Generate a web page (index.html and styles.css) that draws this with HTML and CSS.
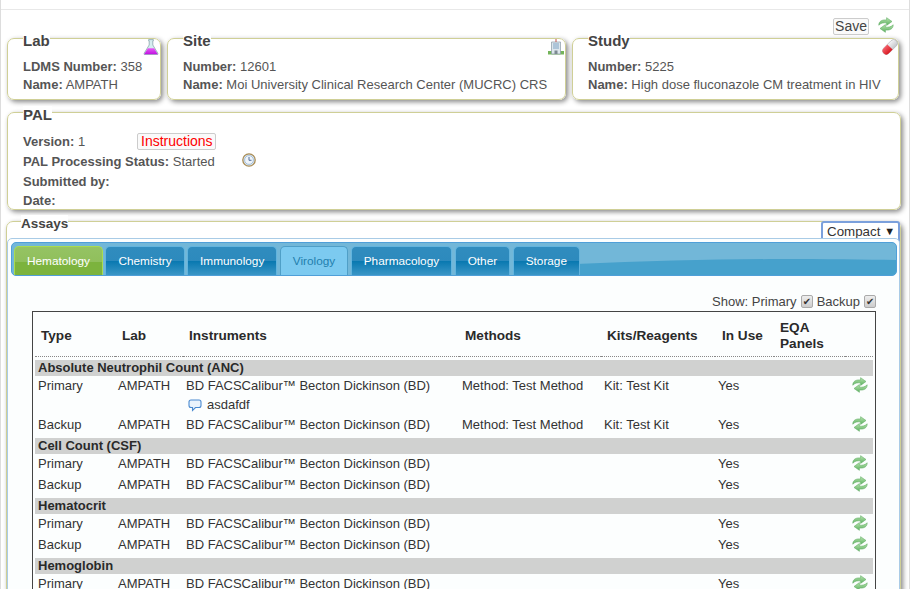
FILE: index.html
```html
<!DOCTYPE html>
<html lang="en">
<head>
<meta charset="utf-8">
<title>PAL</title>
<link rel="stylesheet" href="styles.css">
</head>
<body>
<svg class="defs" width="0" height="0" aria-hidden="true">
  <defs>
    <linearGradient id="gr" x1="0" y1="0" x2="0" y2="1"><stop offset="0" stop-color="#b9e4ae"/><stop offset="1" stop-color="#5bb060"/></linearGradient>
    <linearGradient id="liq" x1="0" y1="0" x2="0" y2="1"><stop offset="0" stop-color="#e85cf5"/><stop offset="1" stop-color="#c010e0"/></linearGradient>
    <linearGradient id="capsule" x1="0" y1="0" x2="0" y2="1"><stop offset="0" stop-color="#f4f4f6"/><stop offset="1" stop-color="#c4c6ca"/></linearGradient>
    <linearGradient id="capred" x1="0" y1="0" x2="0" y2="1"><stop offset="0" stop-color="#f4606a"/><stop offset="1" stop-color="#d81820"/></linearGradient>
    <symbol id="sync" viewBox="0 0 16 16">
      <path d="M.8 8.200C.8 4.200 4 2.500 8.600 3V.7L14 4.500 8.600 8.400V6C5.600 5.400 3 6 .8 8.200Z" fill="url(#gr)" stroke="#64ae68" stroke-width=".6"/>
      <path d="M15.200 7.800C15.200 11.800 12 13.500 7.400 13V15.300L2 11.500 7.400 7.600V10C10.400 10.600 13 10 15.200 7.800Z" fill="url(#gr)" stroke="#64ae68" stroke-width=".6"/>
    </symbol>
  </defs>
</svg>
<div class="page">
  <div class="topbar"></div>
  <div class="toolbar">
    <button class="btn" type="button">Save</button>
    <svg class="sync-big"><use href="#sync"/></svg>
  </div>
  <div class="cards">
    <fieldset class="card card-lab">
      <legend>Lab</legend>
      <svg class="corner" viewBox="0 0 16 16" width="16" height="16"><path d="M5.600 .6H10.400V1.800H9.800V6L14.800 14.200Q15.400 15.600 14 15.600H2Q.6 15.600 1.200 14.200L6.200 6V1.800H5.600Z" fill="#d5eef0" stroke="#7d9ba3" stroke-width=".7"/><path d="M4.900 9.200H11.100L14.800 15.300H1.200Z" fill="url(#liq)"/></svg>
      <p><b>LDMS Number:</b> 358</p>
      <p><b>Name:</b> AMPATH</p>
    </fieldset>
    <fieldset class="card card-site">
      <legend>Site</legend>
      <svg class="corner" viewBox="0 0 16 16" width="16" height="16"><path d="M0 12H16V15.500H0Z" fill="#74b45a"/><path d="M3.500 3H12.500V15H3.500Z" fill="#dde6ec" stroke="#8a9aa5" stroke-width=".7"/><path d="M5 5H11M5 7H11M5 9H11" stroke="#7fa3c4"/><path d="M6.500 11.500H9.500V15H6.500Z" fill="#7c8992"/><path d="M8 0V3" stroke="#c0504d"/></svg>
      <p><b>Number:</b> 12601</p>
      <p><b>Name:</b> Moi University Clinical Research Center (MUCRC) CRS</p>
    </fieldset>
    <fieldset class="card card-study">
      <legend>Study</legend>
      <svg class="corner corner-pill" viewBox="0 0 16 16" width="16" height="16"><g transform="rotate(-45 8 8)"><rect x="-1" y="4.300" width="18" height="7.400" rx="3.700" fill="url(#capsule)" stroke="#a9acb0" stroke-width=".6"/><path d="M8 4.300H2.700A3.700 3.700 0 0 0 2.700 11.700H8Z" fill="url(#capred)"/></g></svg>
      <p><b>Number:</b> 5225</p>
      <p><b>Name:</b> High dose fluconazole CM treatment in HIV</p>
    </fieldset>
  </div>
  <fieldset class="card card-pal">
    <legend>PAL</legend>
    <div class="pal-row row-version"><span class="pal-label"><b>Version:</b> 1</span><button class="btn btn-red" type="button">Instructions</button></div>
    <div class="pal-row row-status"><span class="pal-label"><b>PAL Processing Status:</b> Started</span>
      <svg class="clock" viewBox="0 0 14 14" width="14" height="14"><circle cx="7" cy="7" r="6.200" fill="#dce8f2" stroke="#a98c55" stroke-width="1.300"/><circle cx="7" cy="7" r="4.400" fill="#eef4fa" stroke="#7fa2c6" stroke-width=".6"/><path d="M7 4V7.300H9.500" fill="none" stroke="#3f5f8f" stroke-width=".9"/></svg></div>
    <div class="pal-row row-sub"><b>Submitted by:</b></div>
    <div class="pal-row row-date"><b>Date:</b></div>
  </fieldset>
  <fieldset class="card card-assays">
    <legend>Assays</legend>
    <div class="compact">Compact<span class="caret">▼</span></div>
    <div class="widget">
      <div class="tabbar">
        <svg class="swoosh" viewBox="0 0 320 34" preserveAspectRatio="none"><path d="M0 34V21C70 18 140 16.500 200 16C250 16 290 16.500 320 17V34Z" fill="#46a1cc"/></svg>
        <a class="tab tab-green">Hematology</a>
        <a class="tab">Chemistry</a>
        <a class="tab">Immunology</a>
        <a class="tab tab-light">Virology</a>
        <a class="tab">Pharmacology</a>
        <a class="tab">Other</a>
        <a class="tab">Storage</a>
      </div>
      <div class="show">Show: Primary <input class="chk" type="checkbox" checked> Backup <input class="chk" type="checkbox" checked></div>
      <div class="table-box">
        <table>
          <colgroup><col class="c1"><col class="c2"><col class="c3"><col class="c4"><col class="c5"><col class="c6"><col class="c7"><col class="c8"></colgroup>
          <thead>
            <tr><th>Type</th><th class="th-wide">Lab</th><th>Instruments</th><th>Methods</th><th>Kits/Reagents</th><th class="th-wide">In Use</th><th>EQA Panels</th><th></th></tr>
          </thead>
          <tbody>
            <tr class="group"><td colspan="8">Absolute Neutrophil Count (ANC)</td></tr>
            <tr class="note-row"><td>Primary</td><td>AMPATH</td><td>BD FACSCalibur™ Becton Dickinson (BD)
              <div class="note"><svg viewBox="0 0 14 13" width="14" height="13"><path d="M3 1H11Q13 1 13 3V6.500Q13 8.500 11 8.500H7.500L4.500 11.500V8.500H3Q1 8.500 1 6.500V3Q1 1 3 1Z" fill="#eaf3fc" stroke="#4a8ad0" stroke-width="1.100"/></svg><span>asdafdf</span></div></td><td>Method: Test Method</td><td>Kit: Test Kit</td><td>Yes</td><td></td><td><svg class="sync"><use href="#sync"/></svg></td></tr>
            <tr class="last"><td>Backup</td><td>AMPATH</td><td>BD FACSCalibur™ Becton Dickinson (BD)</td><td>Method: Test Method</td><td>Kit: Test Kit</td><td>Yes</td><td></td><td><svg class="sync"><use href="#sync"/></svg></td></tr>
            <tr class="group"><td colspan="8">Cell Count (CSF)</td></tr>
            <tr><td>Primary</td><td>AMPATH</td><td>BD FACSCalibur™ Becton Dickinson (BD)</td><td></td><td></td><td>Yes</td><td></td><td><svg class="sync"><use href="#sync"/></svg></td></tr>
            <tr class="last"><td>Backup</td><td>AMPATH</td><td>BD FACSCalibur™ Becton Dickinson (BD)</td><td></td><td></td><td>Yes</td><td></td><td><svg class="sync"><use href="#sync"/></svg></td></tr>
            <tr class="group"><td colspan="8">Hematocrit</td></tr>
            <tr><td>Primary</td><td>AMPATH</td><td>BD FACSCalibur™ Becton Dickinson (BD)</td><td></td><td></td><td>Yes</td><td></td><td><svg class="sync"><use href="#sync"/></svg></td></tr>
            <tr class="last"><td>Backup</td><td>AMPATH</td><td>BD FACSCalibur™ Becton Dickinson (BD)</td><td></td><td></td><td>Yes</td><td></td><td><svg class="sync"><use href="#sync"/></svg></td></tr>
            <tr class="group"><td colspan="8">Hemoglobin</td></tr>
            <tr><td>Primary</td><td>AMPATH</td><td>BD FACSCalibur™ Becton Dickinson (BD)</td><td></td><td></td><td>Yes</td><td></td><td><svg class="sync"><use href="#sync"/></svg></td></tr>
          </tbody>
        </table>
      </div>
    </div>
  </fieldset>
</div>
</body>
</html>
```

FILE: styles.css
```css
html, body { margin: 0; padding: 0; height: 589px; overflow: hidden; background: #fff; }
body { font-family: "Liberation Sans", Arial, sans-serif; font-size: 13px; color: #555; }
.defs { position: absolute; }
.page { width: 910px; height: 589px; overflow: hidden; box-sizing: border-box; border-left: 1px solid #ddd; border-right: 1px solid #ddd; }
.topbar { height: 9px; border-bottom: 1px solid #e8e8e8; }
.toolbar { display: flex; justify-content: flex-end; align-items: flex-start; box-sizing: border-box; height: 22px; padding: 8px 15px 0 0; gap: 9px; }
.sync-big { width: 16px; height: 16px; margin-top: -1px; }
.btn { font-family: "Liberation Sans", sans-serif; font-size: 14px; line-height: 15px; padding: 0 1px; margin: 0; background: #fafafa; border: 1px solid #ccc; border-radius: 2px; color: #444; }
.btn-red { color: #f00; padding: 0 2px 0 3px; }
.cards { display: flex; gap: 6px; padding-left: 6px; }
.card { position: relative; margin: 0; min-width: 0; box-sizing: border-box; background: #fff; border: 1px solid #cfcf96; border-radius: 7px; padding: 0 15px; box-shadow: 2px 2px 5px #888; }
legend { padding: 0; font-size: 15px; height: 13px; line-height: 17px; font-weight: bold; background: #fff; color: #444; }
.card p { margin: 0; line-height: 18px; }
.cards .card { height: 68px; padding-top: 13px; }
.card-lab { width: 154px; }
.card-site { width: 399px; }
.card-study { width: 327px; }
.corner { position: absolute; top: -6px; right: 1px; }
.corner-pill { right: 0; }
.card-pal { margin: 6px 0 0 6px; width: 894px; height: 104px; padding-top: 12px; }
.pal-row { display: flex; align-items: center; height: 20px; }
.pal-label { display: block; }
.row-version .pal-label { width: 114px; }
.row-status .pal-label { width: 219px; }
.row-date { height: 18px; }
.clock { margin-top: -3px; }
.card-assays { margin: 5px 0 0 5px; width: 895px; height: 500px; padding: 10px 0 0 0; }
.card-assays legend { font-size: 13.5px; margin-left: 14px; }
.compact { position: absolute; top: -7px; right: 0; width: 79px; height: 24px; box-sizing: border-box; border: 2px solid #7ba0dc; border-radius: 3px; padding: 1px 0 0 4px; font-size: 13.33px; line-height: 15px; color: #333; background: #fff; }
.caret { font-size: 11px; margin-left: 4px; vertical-align: 1px; color: #222; }
.widget { position: relative; border: 1px solid #a9cbe6; border-radius: 5px 5px 0 0; padding: 3px 2px 0 3px; background: #fcfefe; height: 470px; width: 893px; box-sizing: border-box; }
.tabbar { position: relative; display: flex; gap: 2.5px; height: 34px; box-sizing: border-box; padding: 3px 0 0 2px; border-radius: 5px; border: 1px solid #4f9fd8; background: #72b7d8; overflow: hidden; }
.swoosh { position: absolute; right: 0; top: 0; width: 320px; height: 34px; }
.tab { position: relative; display: block; padding: 7px 12px 0; font-size: 11.8px; line-height: 14px; color: #fff; border: 1px solid #62b4de; border-bottom: 0; border-radius: 5px 5px 0 0; background: linear-gradient(#308cbe 0, #2d8abd 50%, #0878b0 50%, #3a96c6 100%); }
.tab-green { background: linear-gradient(#95c363 0, #90bf5c 55%, #7cb33d 55%, #7cb33d 100%); border-color: #a9dc4e; }
.tab-light { background: #7ccaf0; color: #1f7fae; border-color: #4f9fc7; }
.show { display: flex; justify-content: flex-end; align-items: center; gap: 4px; height: 35px; box-sizing: border-box; padding: 15px 21px 0 0; color: #444; }
.chk { appearance: none; position: relative; width: 12px; height: 13px; margin: 0; border: 1px solid #aaa; border-radius: 2px; background: linear-gradient(#eee, #ccc); }
.chk::after { content: "✔"; position: absolute; left: 1px; top: -1px; font: 10px/14px "DejaVu Sans", sans-serif; color: #333; }
.table-box { margin-left: 21px; width: 844px; box-sizing: border-box; border: 1px solid #444; border-bottom: 0; padding: 0 2px; height: 300px; color: #333; }
table { border-collapse: collapse; table-layout: fixed; width: 838px; }
.c1 { width: 80px; } .c2 { width: 68px; } .c3 { width: 276px; } .c4 { width: 142px; } .c5 { width: 114px; } .c6 { width: 59px; } .c7 { width: 71px; } .c8 { width: 28px; }
th { font-size: 13.6px; line-height: 16px; text-align: left; padding: 4px 3px 0 6px; height: 40px; border-bottom: 1px dotted #888; color: #2a2a2a; }
.th-wide { padding-left: 7px; }
tbody::before { content: ""; display: block; height: 3px; }
td { padding: 1px 3px 0; height: 20px; vertical-align: top; line-height: 18px; position: relative; }
.last td { height: 22px; }
.note-row td { height: 38px; }
.group td { height: 16px; line-height: 16px; background: #d0d1d0; font-weight: bold; color: #2a2a2a; padding: 0 3px; }
.note { display: flex; align-items: center; gap: 5px; padding-left: 2px; margin-top: 1px; }
.sync { display: block; width: 16px; height: 16px; margin: 0 0 0 4px; }
```
